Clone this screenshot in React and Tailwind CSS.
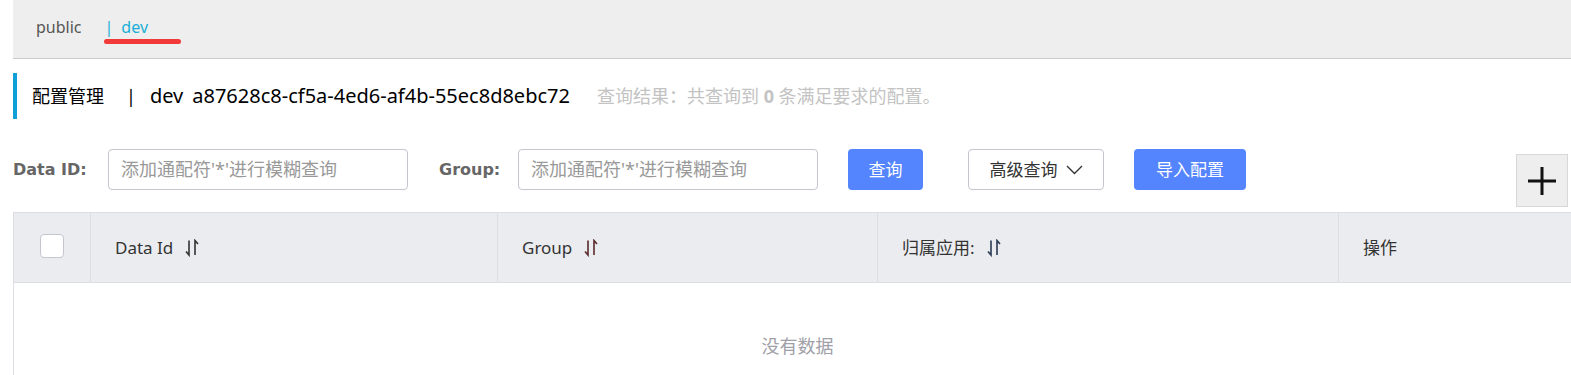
import React from 'react';

const font = { fontFamily: '"Noto Sans", "Noto Sans CJK SC", sans-serif' };
const labelFont = { fontFamily: '"DejaVu Sans", "Noto Sans CJK SC", sans-serif' };

function SortIcon({ color = '#333' }) {
    return (
        <svg width="14" height="18" viewBox="0 0 14 18" className="ml-3 inline-block">
            <path d="M4 1.5 V16 L1 12.5" fill="none" stroke={color} strokeWidth="1.6" />
            <path d="M10 16 V1.5 L13 5" fill="none" stroke={color} strokeWidth="1.6" />
        </svg>
    );
}

function App() {
    return (
        <div className="pl-[13px] bg-white h-[375px] overflow-hidden text-[#333]" style={font}>
            {/* namespace tabs */}
            <div className="h-[59px] bg-[#eeeeee] border-b border-[#cccccc] flex items-center pl-[23px] pb-1 text-[16px]">
                <span className="text-[#555]">public</span>
                <span className="relative ml-[23px] text-[#18aed6]">
                    |<span className="ml-[8px]">dev</span>
                    <span className="absolute -left-[1px] top-[24px] w-[77px] h-[5px] rounded-full bg-[#f33a3a]" />
                </span>
            </div>

            {/* title */}
            <div className="mt-[14px] h-[46px] border-l-4 border-[#0f9fd8] flex items-center pl-[15px] text-black">
                <span className="text-[18px]">配置管理</span>
                <span className="text-[18px] ml-[22px] mr-[14px]">|</span>
                <span className="text-[20px]">dev</span>
                <span className="text-[20px] ml-[9px]">a87628c8-cf5a-4ed6-af4b-55ec8d8ebc72</span>
                <span className="text-[18px] text-[#c3c3c3] ml-[27px]">
                    查询结果：共查询到 <b className="font-bold">0</b> 条满足要求的配置。
                </span>
            </div>

            {/* search row */}
            <div className="flex items-start mt-[30px] pr-[3px]">
                <div className="flex items-center h-[41px]">
                    <span className="text-[16px] font-bold text-[#666] w-[95px]" style={labelFont}>Data ID:</span>
                    <div className="w-[300px] h-[41px] border border-[#c4c6cf] rounded-[4px] flex items-center px-3 text-[18px] text-[#999]">
                        添加通配符'*'进行模糊查询
                    </div>
                    <span className="text-[16px] font-bold text-[#666] ml-[31px] w-[79px]" style={labelFont}>Group:</span>
                    <div className="w-[300px] h-[41px] border border-[#c4c6cf] rounded-[4px] flex items-center px-3 text-[18px] text-[#999]">
                        添加通配符'*'进行模糊查询
                    </div>
                    <button className="ml-[30px] w-[75px] h-[41px] rounded-[4px] bg-[#5584ff] text-white text-[17px]">查询</button>
                    <button className="ml-[45px] w-[136px] h-[41px] rounded-[4px] border border-[#c4c6cf] bg-white text-[#333] text-[17px] flex items-center justify-center gap-2">
                        高级查询
                        <svg width="17" height="10" viewBox="0 0 17 10">
                            <polyline points="1,1 8.5,8.5 16,1" fill="none" stroke="#333" strokeWidth="1.4" />
                        </svg>
                    </button>
                    <button className="ml-[30px] w-[112px] h-[41px] rounded-[4px] bg-[#5584ff] text-white text-[17px]">导入配置</button>
                </div>
                <div className="ml-auto mt-[5px] w-[52px] h-[53px] bg-[#eeeeee] border border-[#d8d8d8] flex items-center justify-center">
                    <svg width="32" height="32" viewBox="0 0 32 32">
                        <path d="M16 2 V30 M2 16 H30" stroke="#111" strokeWidth="3" />
                    </svg>
                </div>
            </div>

            {/* table */}
            <div className="mt-[5px] border-l border-t border-[#dcdee3]">
                <div className="flex h-[70px] bg-[#ebecf0] border-b border-[#dcdee3] text-[17px] text-[#333]">
                    <div className="w-[77px] flex items-center justify-center border-r border-[#dcdee3]">
                        <div className="w-[24px] h-[24px] rounded-[4px] border border-[#c4c6cf] bg-white -mt-[4px]" />
                    </div>
                    <div className="w-[407px] flex items-center px-6 border-r border-[#dcdee3]">
                        Data Id <SortIcon />
                    </div>
                    <div className="w-[380px] flex items-center px-6 border-r border-[#dcdee3]">
                        Group <SortIcon color="#5a2a2a" />
                    </div>
                    <div className="w-[461px] flex items-center px-6 border-r border-[#dcdee3]">
                        归属应用: <SortIcon color="#2a3a55" />
                    </div>
                    <div className="flex-1 flex items-center px-6">操作</div>
                </div>
                <div className="h-[120px] flex justify-center pl-[10px] pt-[50px] text-[18px] text-[#a0a0a8]">
                    没有数据
                </div>
            </div>
        </div>
    );
}

export default App;
